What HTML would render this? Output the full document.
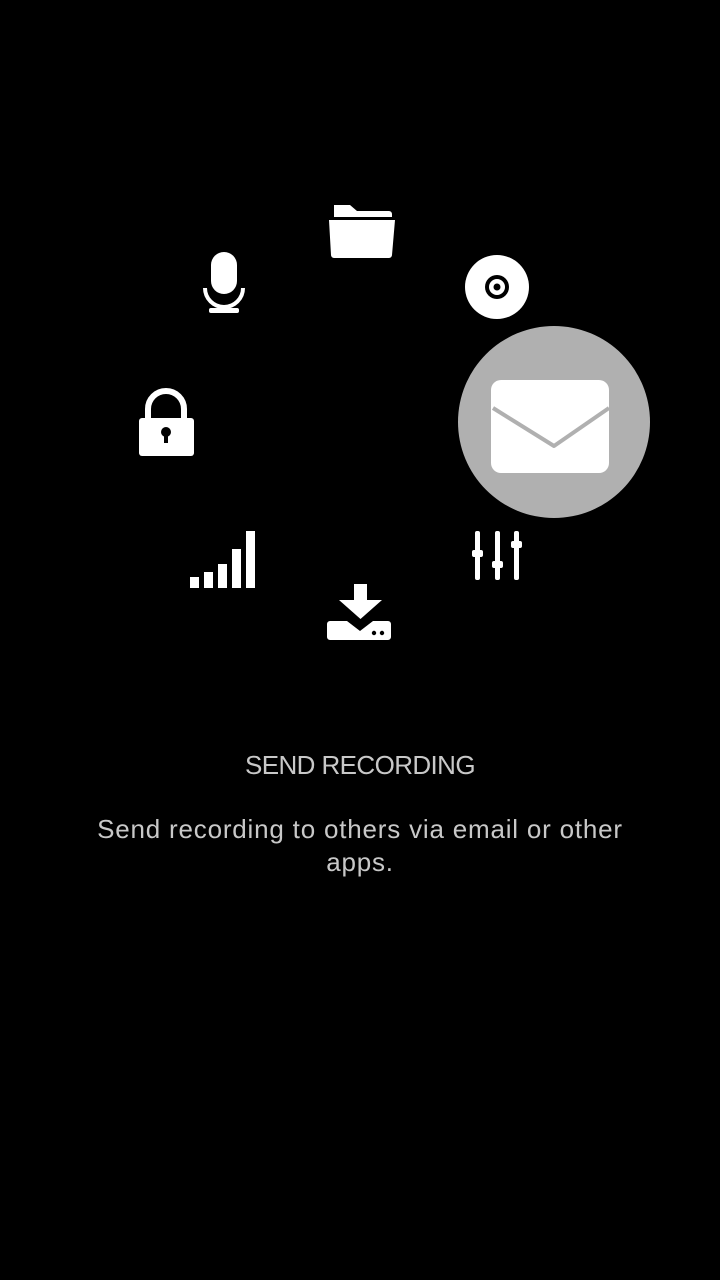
<!DOCTYPE html>
<html><head><meta charset="utf-8"><style>
html,body{margin:0;padding:0;background:#000;width:720px;height:1280px;overflow:hidden}
.t{position:absolute;left:0;width:720px;text-align:center;color:#c8c8c8;font-family:"Liberation Sans",sans-serif;font-size:26px}
</style></head><body>
<svg width="720" height="1280" style="position:absolute;left:0;top:0" fill="#fff">
<path d="M334 205 h16 l7 6 h32 a3 3 0 0 1 3 3 v3 h-58 z"/>
<path d="M329 220 h66 l-3 35 a3 3 0 0 1 -3 3 h-55 a3 3 0 0 1 -3 -3 z"/>
<rect x="211" y="252" width="26" height="42" rx="13"/>
<path d="M205 288 a19 19 0 0 0 38 0" fill="none" stroke="#fff" stroke-width="4"/>
<rect x="222" y="305" width="4" height="6"/>
<rect x="209" y="308" width="30" height="5" rx="2"/>
<circle cx="497" cy="287" r="32"/>
<circle cx="497" cy="287" r="12" fill="#000"/>
<circle cx="497" cy="287" r="8" fill="#fff"/>
<circle cx="497" cy="287" r="3.5" fill="#000"/>
<path d="M148 419 v-10 a18 18 0 0 1 36 0 v10" fill="none" stroke="#fff" stroke-width="6"/>
<rect x="139" y="418" width="55" height="38" rx="3"/>
<circle cx="166" cy="432" r="5" fill="#000"/>
<rect x="164" y="433" width="4" height="10" fill="#000"/>
<rect x="190" y="577" width="9" height="11"/>
<rect x="204" y="572" width="9" height="16"/>
<rect x="218" y="564" width="9" height="24"/>
<rect x="232" y="549" width="9" height="39"/>
<rect x="246" y="531" width="9" height="57"/>
<rect x="475" y="531" width="5" height="49" rx="2"/>
<rect x="472" y="550" width="11" height="7" rx="2"/>
<rect x="495" y="531" width="5" height="49" rx="2"/>
<rect x="492" y="561" width="11" height="7" rx="2"/>
<rect x="514" y="531" width="5" height="49" rx="2"/>
<rect x="511" y="541" width="11" height="7" rx="2"/>
<rect x="354" y="584" width="13" height="16"/>
<path d="M339 600 h43 l-21.5 19 z"/>
<path d="M327 624 a3 3 0 0 1 3 -3 h17 l13 10 l13 -10 h15 a3 3 0 0 1 3 3 v13 a3 3 0 0 1 -3 3 h-58 a3 3 0 0 1 -3 -3 z"/>
<circle cx="374" cy="633" r="2.2" fill="#000"/>
<circle cx="382" cy="633" r="2.2" fill="#000"/>
<circle cx="554" cy="422" r="96" fill="#b0b0b0"/>
<rect x="491" y="380" width="118" height="93" rx="10"/>
<path d="M493 408 l61 38 l55 -38" fill="none" stroke="#b0b0b0" stroke-width="4" stroke-linejoin="round"/>
</svg>
<div class="t" style="top:750px;letter-spacing:-0.6px">SEND RECORDING</div>
<div class="t" style="top:813px;line-height:33px;padding:0 60px;box-sizing:border-box;letter-spacing:0.8px">Send recording to others via email or other apps.</div>
</body></html>
